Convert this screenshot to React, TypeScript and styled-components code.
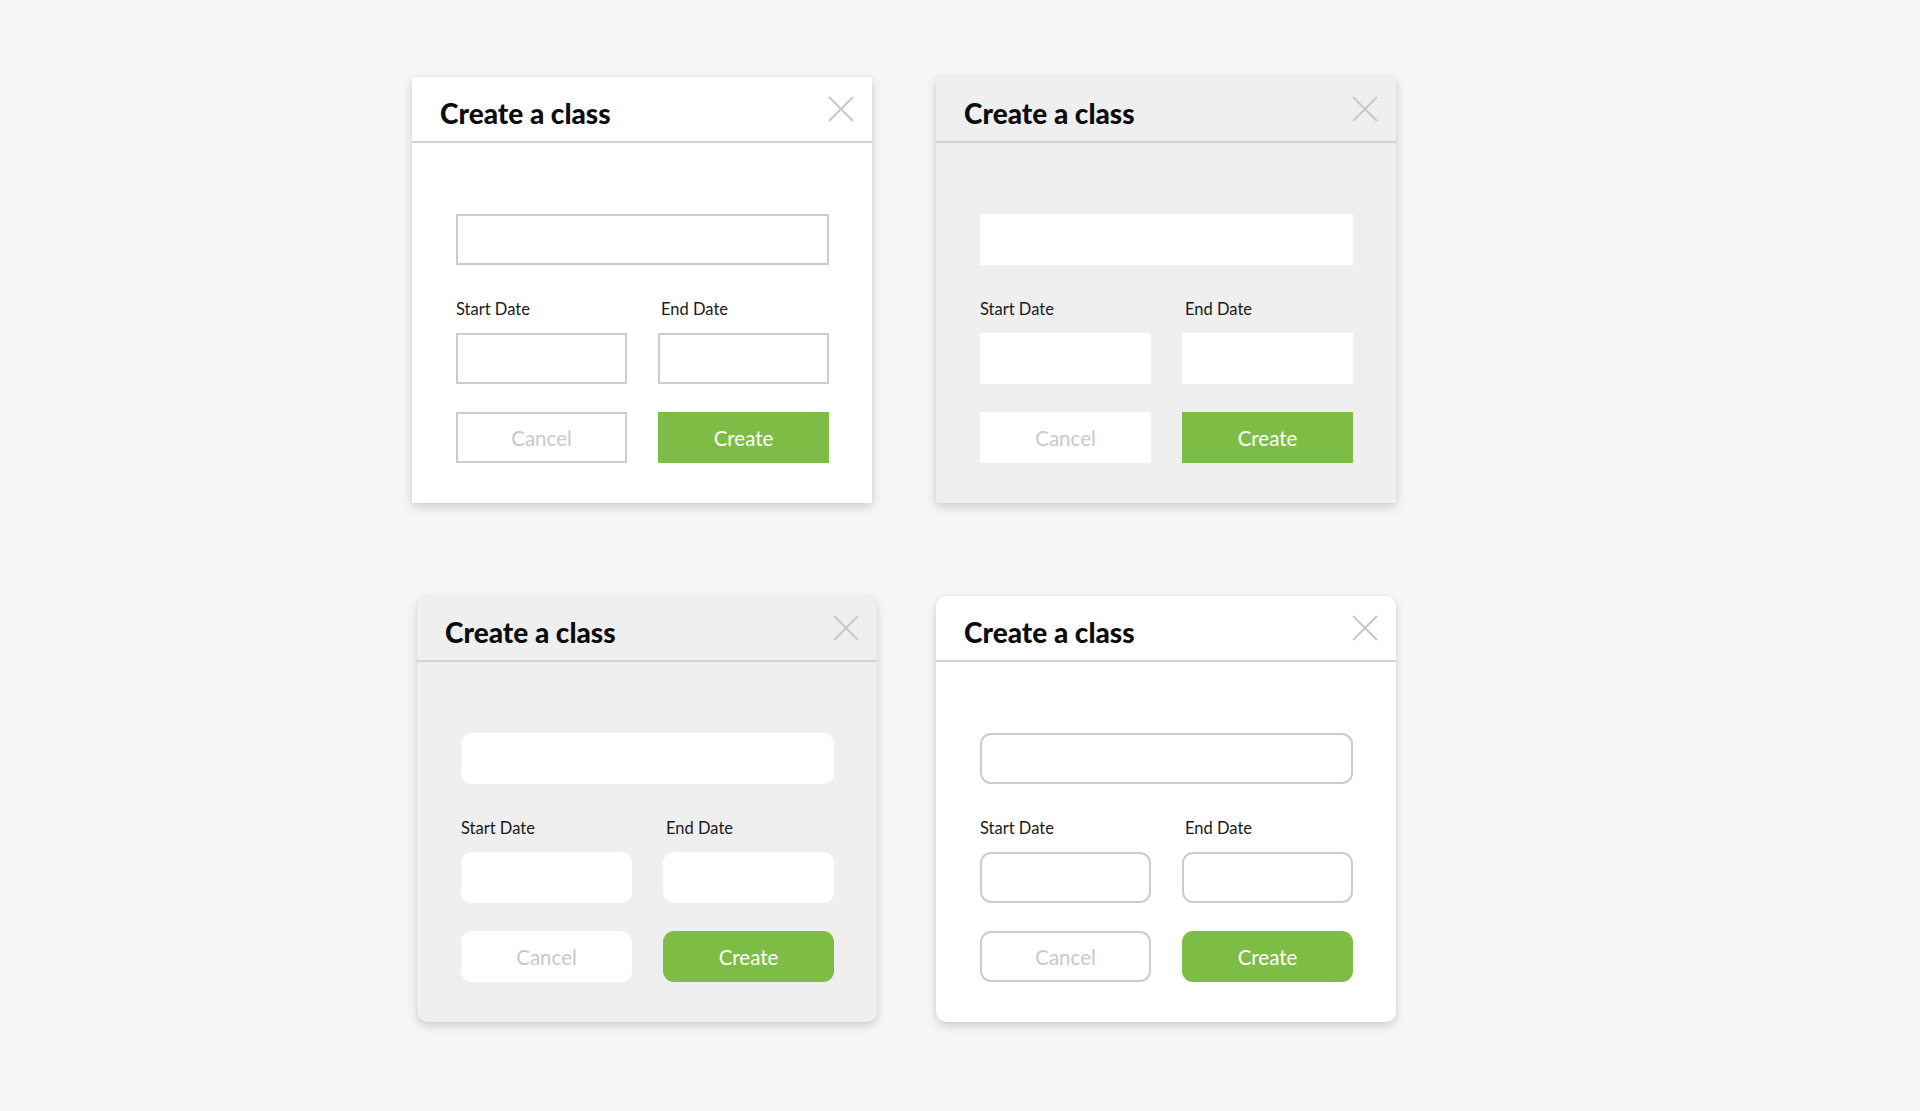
import React from "react";
import styled, { createGlobalStyle, css } from "styled-components";

const Global = createGlobalStyle`
  html, body { margin: 0; padding: 0; }
  body {
    background: #f6f6f6;
    font-family: Lato, "Open Sans", "Noto Sans", sans-serif;
    min-height: 1111px;
  }
`;

type Variant = "sharpWhite" | "sharpGray" | "roundGray" | "roundWhite";

const isGray = (v: Variant) => v === "sharpGray" || v === "roundGray";
const isRound = (v: Variant) => v === "roundGray" || v === "roundWhite";

const Page = styled.main`
  display: grid;
  grid-template-columns: 460px 461px;
  column-gap: 64px;
  row-gap: 93px;
  padding: 77px 0 0 412px;
`;

const Card = styled.section<{ $v: Variant; $shift?: number }>`
  width: 460px;
  height: 426px;
  box-sizing: border-box;
  background: ${(p) => (isGray(p.$v) ? "#efefef" : "#ffffff")};
  border-radius: ${(p) => (isRound(p.$v) ? "10px" : "0")};
  box-shadow: 0 4px 10px rgba(0, 0, 0, 0.16), 0 0 2px rgba(0, 0, 0, 0.06);
  margin-left: ${(p) => p.$shift ?? 0}px;
  display: flex;
  flex-direction: column;
  overflow: hidden;
`;

const Header = styled.header`
  height: 64px;
  border-bottom: 2px solid #d2d2d2;
  display: flex;
  align-items: center;
  justify-content: space-between;
  padding: 0 18px 0 28px;
  flex-shrink: 0;
`;

const Title = styled.h2`
  margin: 8px 0 0 0;
  font-family: Lato, "Open Sans", sans-serif;
  font-weight: 900;
  font-size: 28px;
  line-height: 28px;
  color: #0d0d0d;
  letter-spacing: 0;
`;

const CloseButton = styled.button`
  width: 26px;
  height: 26px;
  padding: 0;
  border: none;
  background: transparent;
  display: flex;
  cursor: pointer;
`;

const Body = styled.div`
  padding: 71px 43px 40px 44px;
  display: flex;
  flex-direction: column;
`;

const fieldBase = css<{ $v: Variant }>`
  height: 51px;
  box-sizing: border-box;
  background: #ffffff;
  border: ${(p) => (isGray(p.$v) ? "none" : "2px solid #cccccc")};
  border-radius: ${(p) => (isRound(p.$v) ? "11px" : "0")};
`;

const Field = styled.input<{ $v: Variant }>`
  ${fieldBase};
  width: 100%;
  display: block;
  outline: none;
  font-family: Lato, sans-serif;
  font-size: 16px;
  padding: 0 12px;
`;

const Columns = styled.div<{ $top: number }>`
  display: grid;
  grid-template-columns: 1fr 1fr;
  column-gap: 31px;
  margin-top: ${(p) => p.$top}px;
`;

const FieldGroup = styled.div`
  display: flex;
  flex-direction: column;
`;

const Label = styled.label<{ $indent?: boolean }>`
  font-family: Lato, sans-serif;
  font-size: 16.5px;
  line-height: 16px;
  color: #1a1a1a;
  margin-bottom: 16px;
  padding-left: ${(p) => (p.$indent ? "3px" : "0")};
`;

const Button = styled.button<{ $v: Variant; $primary?: boolean }>`
  ${fieldBase};
  width: 100%;
  font-family: Lato, sans-serif;
  font-size: 20.5px;
  cursor: pointer;
  color: ${(p) => (p.$primary ? "#ffffff" : "#c9c9c9")};
  ${(p) =>
    p.$primary &&
    css`
      background: #7dbd45;
      border: none;
    `}
`;

const CloseIcon = () => (
  <svg width="26" height="26" viewBox="0 0 26 26" fill="none">
    <path d="M1 1L25 25M25 1L1 25" stroke="#c8c8c8" strokeWidth="2" />
  </svg>
);

const Dialog = ({ v, shift }: { v: Variant; shift?: number }) => (
  <Card $v={v} $shift={shift}>
    <Header>
      <Title>Create a class</Title>
      <CloseButton aria-label="Close">
        <CloseIcon />
      </CloseButton>
    </Header>
    <Body>
      <Field $v={v} />
      <Columns $top={36}>
        <FieldGroup>
          <Label>Start Date</Label>
          <Field $v={v} />
        </FieldGroup>
        <FieldGroup>
          <Label $indent>End Date</Label>
          <Field $v={v} />
        </FieldGroup>
      </Columns>
      <Columns $top={28}>
        <Button $v={v}>Cancel</Button>
        <Button $v={v} $primary>
          Create
        </Button>
      </Columns>
    </Body>
  </Card>
);

export default function App() {
  return (
    <>
      <Global />
      <Page>
        <Dialog v="sharpWhite" />
        <Dialog v="sharpGray" />
        <Dialog v="roundGray" shift={5} />
        <Dialog v="roundWhite" />
      </Page>
    </>
  );
}
